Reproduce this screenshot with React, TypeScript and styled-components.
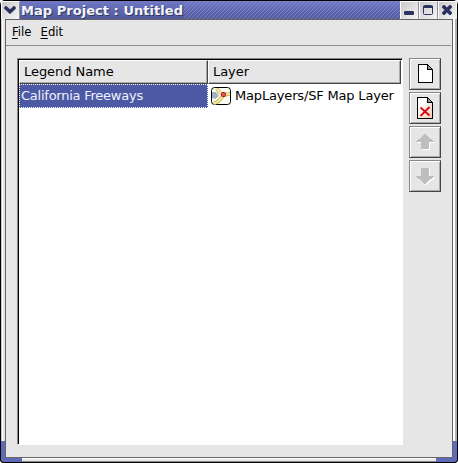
import React from 'react';
import styled, { createGlobalStyle } from 'styled-components';

const GlobalStyle = createGlobalStyle`
  * { box-sizing: border-box; }
  body { margin: 0; background: #fff; font-family: "DejaVu Sans", sans-serif; overflow: hidden; }
  svg { display: block; flex: none; }
`;

const Window = styled.div`
  width: 458px;
  height: 463px;
  display: flex;
  flex-direction: column;
  position: relative;
  background: #000;
  padding: 1px;
  border-radius: 5px 5px 4px 4px;
  overflow: hidden;
`;

const TitleBar = styled.header`
  height: 18px;
  flex: none;
  display: flex;
  background:
    repeating-linear-gradient(135deg, rgba(170,185,240,0.35) 0 1px, transparent 1px 2.83px) 183px 0 / 216px 18px no-repeat,
    linear-gradient(#7279c5, #6870bb 25%, #525a9c);
`;

const Title = styled.h1`
  flex: 1;
  margin: 0;
  padding-left: 1px;
  font-size: 13px;
  line-height: 19px;
  font-weight: bold;
  letter-spacing: 0.04px;
  color: #f4f4fa;
  text-shadow: 1px 1px 0 #30375f;
  white-space: nowrap;
`;

const TitleButton = styled.button<{ $last?: boolean }>`
  width: 19px;
  height: 18px;
  padding: 0 1px 1px 0;
  border: 0;
  border-top: 1px solid #fff;
  border-left: 1px solid #fff;
  border-right: 1px solid ${p => (p.$last ? '#f6f6f6' : '#8e8e90')};
  background: linear-gradient(135deg, #c9c9cb, #f6f6f6);
  display: flex;
  align-items: center;
  justify-content: center;
`;

const Frame = styled.div`
  flex: 1;
  min-height: 0;
  padding: 0 4px 5px;
  background: linear-gradient(90deg, #cfc9cb 0 1px, #fff 1px 2px, #e9e4e5 2px 4px, #e6e6e6 4px 452px, #fff 452px 454px, #b5b0b2 454px 456px);
`;

const Content = styled.main`
  height: 439px;
  border: 1px solid #666;
  background: #e6e6e6;
`;

const BottomEdge = styled.div`
  position: absolute;
  left: 1px;
  right: 1px;
  bottom: 1px;
  height: 4px;
  background: linear-gradient(#fff 0 1px, #eae7e8 1px 3px, #8b8788 3px);
`;

const Corner = styled.div<{ $right?: boolean }>`
  position: absolute;
  bottom: 1px;
  ${p => (p.$right ? 'right: 1px;' : 'left: 1px;')}
  width: 21px;
  height: 21px;
  border: 0 solid #606ab7;
  border-bottom-width: 4px;
  ${p => (p.$right ? 'border-right-width: 4px; border-bottom-right-radius: 4px;' : 'border-left-width: 4px; border-bottom-left-radius: 4px;')}
  box-shadow: ${p => (p.$right ? '1px' : '-1px')} 1px 0 #000;
`;

const MenuBar = styled.nav`
  height: 26px;
  margin-right: 1px;
  border-bottom: 1px solid #8d8d8d;
  display: flex;
  gap: 9px;
  padding: 0 6px;
  font-family: "DejaVu Sans Condensed", "DejaVu Sans", sans-serif;
  font-stretch: condensed;
  font-size: 13px;
  line-height: 24px;
  color: #000;
`;

const Mnemonic = styled.span`
  text-decoration: underline;
  text-underline-offset: 2px;
  text-decoration-thickness: 1px;
`;

const Workspace = styled.div`
  display: flex;
  align-items: flex-start;
  gap: 6px;
  padding: 12px 0 0 11px;
`;

const ListView = styled.section`
  width: 386px;
  height: 387px;
  background: #fff;
  border: 1px solid;
  border-color: #888 #fff #fff #888;
  box-shadow: inset 1px 1px 0 #000;
  padding: 1px;
`;

const Columns = styled.div`
  display: grid;
  grid-template-columns: 189px 193px;
`;

const HeaderCell = styled.div`
  height: 24px;
  padding-left: 4px;
  font-size: 13px;
  line-height: 22px;
  letter-spacing: -0.06px;
  background: #e6e6e6;
  border: 1px solid;
  border-color: #fff #444 #444 #fff;
  box-shadow: inset -1px -1px 0 #aaa;
  white-space: nowrap;
`;

const Cell = styled.div<{ $selected?: boolean }>`
  height: 24px;
  display: flex;
  align-items: center;
  gap: 4px;
  padding: 0 0 0 3px;
  font-size: 13px;
  letter-spacing: -0.17px;
  white-space: nowrap;
  ${p => p.$selected && 'background: #4c5aa5; color: #f0f0fa; border: 1px dotted #fff; padding: 0 0 1px 1px; letter-spacing: -0.24px;'}
`;

const LayerName = styled.span`
  padding-bottom: 2px;
`;

const ToolColumn = styled.aside`
  display: flex;
  flex-direction: column;
  gap: 2px;
`;

const ToolButton = styled.button`
  width: 32px;
  height: 32px;
  padding: 0;
  background: #e6e6e6;
  border: 1px solid;
  border-color: #888 #444 #444 #888;
  box-shadow: inset 1px 1px 0 #fff, inset -1px -1px 0 #aaa;
  display: flex;
  align-items: center;
  justify-content: center;
`;

const PageIcon = ({ remove = false }: { remove?: boolean }) => (
  <svg width="18" height="22" viewBox="0 0 18 22" shapeRendering="crispEdges">
    <defs>
      <linearGradient id="paper" x1="0" y1="0" x2="1" y2="1">
        <stop offset="0.3" stopColor="#fff" />
        <stop offset="1" stopColor="#f0c8b4" />
      </linearGradient>
      <linearGradient id="fold" x1="1" y1="0" x2="0" y2="1">
        <stop offset="0" stopColor="#fff" />
        <stop offset="1" stopColor="#666" />
      </linearGradient>
    </defs>
    <path d={remove ? 'M1.5 .5h10l5 5v16h-15z' : 'M2.5 1.5h9l5 5v13h-14z'} fill={remove ? 'url(#paper)' : '#fff'} stroke="#000" />
    <path d={remove ? 'M11.5 .5v5h5z' : 'M11.5 1.5v5h5z'} fill="url(#fold)" stroke="#000" />
    {remove && <path d="M4.500 10.500l9 8M13.500 10l-9 9" stroke="#d40b0b" strokeWidth="1.8" shapeRendering="auto" />}
  </svg>
);

const ArrowIcon = ({ down = false }: { down?: boolean }) => {
  const d = down ? 'M6 1h8v8h5.500l-9.500 8l-9.500-8h5.500z' : 'M10 1l9.500 8h-5.500v7h-8v-7h-5.500z';
  return (
    <svg width="20" height="18" viewBox="0 0 20 18" overflow="visible" shapeRendering="crispEdges">
      <path d={d} fill="#fff" transform="translate(1 1)" />
      <path d={d} fill="#bebebe" />
    </svg>
  );
};

const MapIcon = () => (
  <svg width="20" height="18" viewBox="0 0 20 18">
    <rect x=".5" y=".5" width="19" height="17" rx="3" fill="#fffef4" stroke="#000" />
    <path d="M1 5h4l3 4-4 3-3-1z" fill="#9fb4bd" />
    <path d="M6 1.5c1 3 3 5 6.500 6M19 7l-6.500 1C10 12 8 15 3 16.500" fill="none" stroke="#b7a94c" strokeWidth="3.400" />
    <path d="M6 1.500c1 3 3 5 6.500 6M19 7l-6.500 1C10 12 8 15 3 16.500" fill="none" stroke="#f6ec9a" strokeWidth="2.200" />
    <rect x="10.500" y="5.500" width="4" height="4" rx="1" fill="#e65353" stroke="#9d2020" />
  </svg>
);

const ChevronIcon = () => (
  <svg width="12" height="8" viewBox="0 0 12 8"><path d="M2 2l4 3.700L10 2" fill="none" stroke="#2c3260" strokeWidth="3.600" strokeLinecap="round" /></svg>
);
const MinimizeIcon = () => (
  <svg width="10" height="10" viewBox="0 0 10 10"><rect y="6" width="10" height="4" rx="1.300" fill="#2c3260" /></svg>
);
const MaximizeIcon = () => (
  <svg width="10" height="10" viewBox="0 0 10 10"><rect x=".5" y=".5" width="9" height="9" rx="1" fill="none" stroke="#2c3260" /><path d="M0 1h10v2H0z" fill="#2c3260" /></svg>
);
const CloseIcon = () => (
  <svg width="10" height="10" viewBox="0 0 10 10"><path d="M2 2l6 6M8 2L2 8" stroke="#2c3260" strokeWidth="3.600" strokeLinecap="square" /></svg>
);

export default function App() {
  return (
    <>
      <GlobalStyle />
      <Window>
        <TitleBar>
          <TitleButton><ChevronIcon /></TitleButton>
          <Title>Map Project : Untitled</Title>
          <TitleButton><MinimizeIcon /></TitleButton>
          <TitleButton><MaximizeIcon /></TitleButton>
          <TitleButton $last><CloseIcon /></TitleButton>
        </TitleBar>
        <Frame>
          <Content>
            <MenuBar>
              <span><Mnemonic>F</Mnemonic>ile</span>
              <span><Mnemonic>E</Mnemonic>dit</span>
            </MenuBar>
            <Workspace>
              <ListView>
                <Columns>
                  <HeaderCell>Legend Name</HeaderCell>
                  <HeaderCell>Layer</HeaderCell>
                  <Cell $selected>California Freeways</Cell>
                  <Cell><MapIcon /><LayerName>MapLayers/SF Map Layer</LayerName></Cell>
                </Columns>
              </ListView>
              <ToolColumn>
                <ToolButton><PageIcon /></ToolButton>
                <ToolButton><PageIcon remove /></ToolButton>
                <ToolButton><ArrowIcon /></ToolButton>
                <ToolButton><ArrowIcon down /></ToolButton>
              </ToolColumn>
            </Workspace>
          </Content>
        </Frame>
        <BottomEdge />
        <Corner />
        <Corner $right />
      </Window>
    </>
  );
}
